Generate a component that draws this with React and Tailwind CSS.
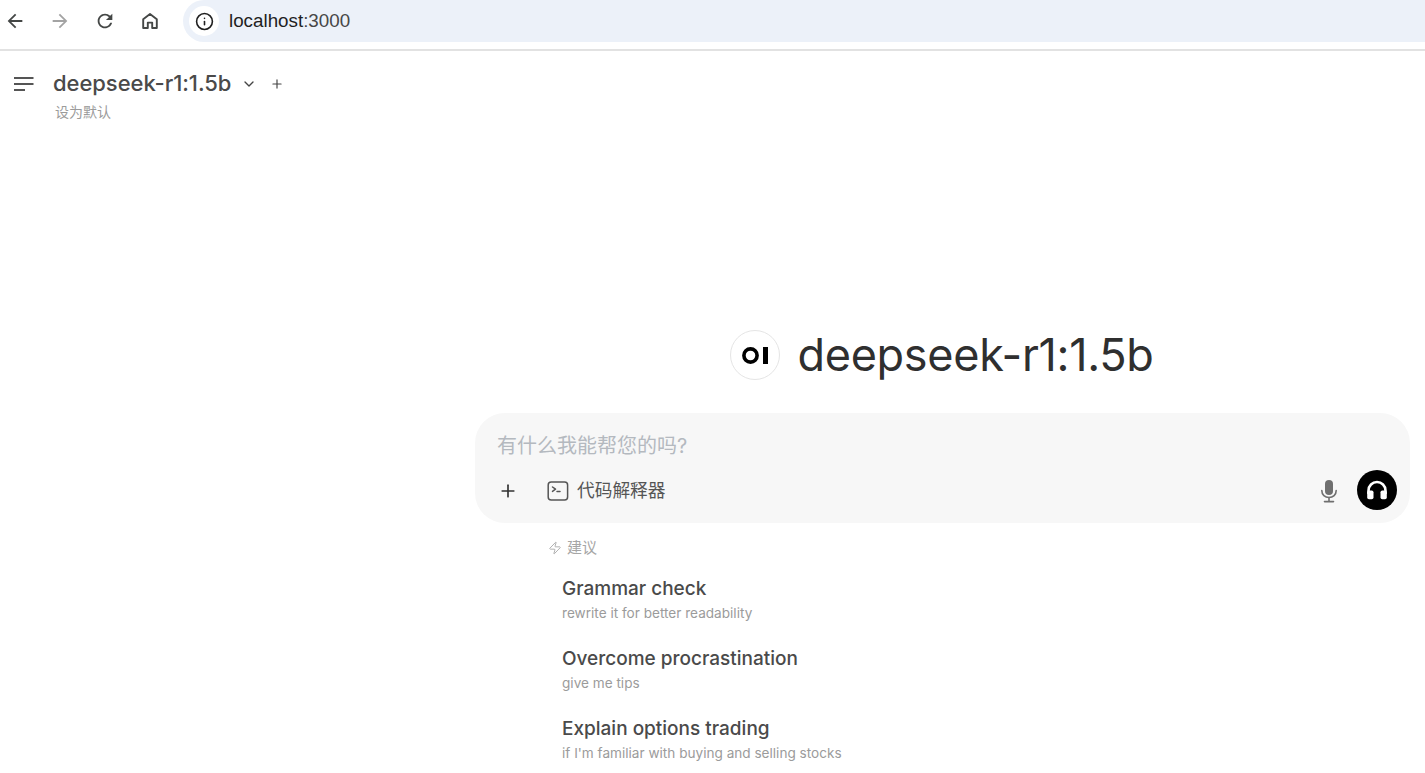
import React from "react";
import { Info, ChevronDown, Plus, Zap } from "lucide-react";

const suggestions = [
  { title: "Grammar check", sub: "rewrite it for better readability" },
  { title: "Overcome procrastination", sub: "give me tips" },
  { title: "Explain options trading", sub: "if I'm familiar with buying and selling stocks" },
];

function NavIcon({ d, color = "#444746", className = "" }) {
  return (
    <svg width="22" height="22" viewBox="0 0 24 24" fill={color} className={className}>
      <path d={d} />
    </svg>
  );
}

function HomeIcon() {
  return (
    <svg width="22" height="22" viewBox="0 0 22 22" fill="none" stroke="#444746" strokeWidth="1.9" strokeLinejoin="round" className="ml-[23px]">
      <path d="M4.2 18V9.2L11 4l6.8 5.2V18h-4.6v-5.4H8.8V18z" />
    </svg>
  );
}

function Logo() {
  return (
    <svg width="26" height="17" viewBox="0 0 26 17" fill="none" className="-ml-[1px]">
      <circle cx="8.5" cy="8.5" r="6.6" stroke="#000" strokeWidth="3.6" />
      <rect x="21" y="0" width="5" height="17" fill="#000" />
    </svg>
  );
}

function TerminalIcon() {
  return (
    <svg width="22" height="20" viewBox="0 0 22 20" fill="none" stroke="#555" strokeWidth="1.5" strokeLinecap="round" strokeLinejoin="round">
      <rect x="1.2" y="1" width="19.4" height="18" rx="3" />
      <path d="M5.5 6l3 2.2-3 2.2M10 10.5h3" />
    </svg>
  );
}

function MicIcon() {
  return (
    <svg width="18" height="24" viewBox="0 0 18 24" fill="none">
      <rect x="5" y="1" width="8" height="15" rx="4" fill="#6f6f6f" />
      <path d="M1.8 11.5c0 4.2 3.2 7 7.2 7s7.2-2.8 7.2-7" stroke="#6f6f6f" strokeWidth="1.6" strokeLinecap="round" />
      <path d="M9 18.5v3.5M4.5 22.6h9" stroke="#6f6f6f" strokeWidth="1.6" strokeLinecap="round" />
    </svg>
  );
}

function HeadphonesIcon() {
  return (
    <svg width="22" height="20" viewBox="0 0 22 20" fill="none">
      <path d="M2.5 14v-3.5a8.5 8.5 0 0 1 17 0V14" stroke="#fff" strokeWidth="2.6" />
      <rect x="1.2" y="10.5" width="6.3" height="8.7" rx="1.8" fill="#fff" />
      <rect x="14.5" y="10.5" width="6.3" height="8.7" rx="1.8" fill="#fff" />
    </svg>
  );
}

export default function App() {
  return (
    <div className="h-[773px] w-full overflow-hidden bg-white font-['Inter','Noto_Sans_CJK_SC',sans-serif]">
      {/* browser toolbar */}
      <div className="flex h-[51px] items-start border-b-2 border-[#e2e2e2]">
        <div className="flex h-[42px] w-[183px] items-center pl-[4px]">
          <NavIcon d="M20 11H7.83l5.59-5.59L12 4l-8 8 8 8 1.41-1.41L7.83 13H20v-2z" />
          <NavIcon color="#a3a3a3" className="ml-[23px]" d="M4 11h12.17l-5.59-5.59L12 4l8 8-8 8-1.41-1.41L16.17 13H4v-2z" />
          <NavIcon className="ml-[23px]" d="M17.65 6.35A7.95 7.95 0 0 0 12 4c-4.42 0-7.99 3.58-7.99 8s3.57 8 7.99 8c3.73 0 6.84-2.55 7.73-6h-2.08A5.99 5.99 0 0 1 12 18c-3.31 0-6-2.69-6-6s2.69-6 6-6c1.66 0 3.14.69 4.22 1.78L13 11h7V4l-2.35 2.35z" />
          <HomeIcon />
        </div>
        <div className="flex h-[42px] flex-1 items-center rounded-l-[21px] bg-[#ecf1f9] pl-[6px]">
          <div className="flex h-[30px] w-[30px] items-center justify-center rounded-full bg-white">
            <Info size={19} color="#1f1f1f" strokeWidth={2} />
          </div>
          <span className="ml-[10px] font-['Liberation_Sans',sans-serif] text-[18.8px] leading-none text-[#1f1f1f]">
            localhost<span className="text-[#474747]">:3000</span>
          </span>
        </div>
      </div>

      {/* model header */}
      <div className="h-[279px] pl-[14px]">
        <div className="flex h-[64px] items-center pt-[1px]">
          <svg width="20" height="14" viewBox="0 0 20 14" stroke="#555" strokeWidth="2">
            <path d="M0 1h19.5M0 7h19.5M0 13h11" />
          </svg>
          <span className="ml-[19px] text-[22px] font-medium tracking-[-0.05px] text-[#4a4a4a]">deepseek-r1:1.5b</span>
          <ChevronDown size={16} color="#444" strokeWidth={2} className="ml-[10px]" />
          <Plus size={14} color="#444" strokeWidth={2} className="ml-[13px]" />
        </div>
        <div className="-mt-[11px] ml-[41px] text-sm leading-4 text-[#9b9b9b]">设为默认</div>
      </div>

      {/* centre column */}
      <div className="ml-[475px] mr-[15px]">
        <div className="flex items-center justify-center gap-[17px] pr-[1px]">
          <div className="flex h-[50px] w-[50px] items-center justify-center rounded-full border border-[#e5e5e5]">
            <Logo />
          </div>
          <span className="text-[45px] leading-[50px] tracking-[-0.3px] text-[#2f2f2f]">deepseek-r1:1.5b</span>
        </div>

        <div className="mt-[33px] flex h-[110px] flex-col rounded-[30px] bg-[#f7f7f7] px-[13px]">
          <div className="mt-[21px] ml-[9px] h-[24px] text-[20px] leading-[24px] text-[#b4b9bf]">有什么我能帮您的吗?</div>
          <div className="mt-[14px] flex items-center">
            <Plus size={20} color="#333" strokeWidth={2} className="ml-[10px]" />
            <span className="ml-[29px]">
              <TerminalIcon />
            </span>
            <span className="ml-[8px] text-[17.7px] leading-6 text-[#555]">代码解释器</span>
            <span className="ml-auto mr-[19px] flex">
              <MicIcon />
            </span>
            <div className="-mt-[2px] flex h-10 w-10 items-center justify-center rounded-full bg-black">
              <HeadphonesIcon />
            </div>
          </div>
        </div>

        <div className="ml-[73px] mt-[15px] flex h-5 items-center text-[15px] text-[#a6a6a6]">
          <Zap size={14} color="#a6a6a6" strokeWidth={1.5} />
          <span className="ml-[5px]">建议</span>
        </div>

        <div className="ml-[87px] mt-[17px] flex flex-col">
          {suggestions.map((s) => (
            <div key={s.title} className="h-[70px]">
              <div className="text-[19px] leading-7 font-medium text-[#4a4a4a]">{s.title}</div>
              <div className="text-[13.6px] leading-[20px] text-[#9b9b9b]">{s.sub}</div>
            </div>
          ))}
        </div>
      </div>
    </div>
  );
}
